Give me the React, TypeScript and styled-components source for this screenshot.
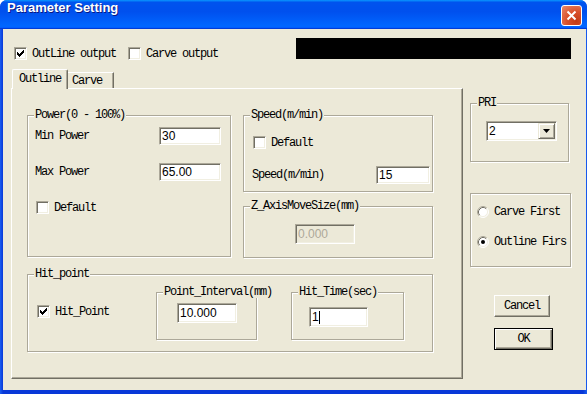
import styled, { createGlobalStyle, css } from "styled-components";

const GlobalStyle = createGlobalStyle`
  html, body { margin: 0; padding: 0; background: #fff; }
  body { width: 587px; height: 394px; overflow: hidden; }
`;

const MONO = `"Liberation Mono", "DejaVu Sans Mono", monospace`;
const SANS = `"Liberation Sans", Arial, sans-serif`;
const FACE = "#ece9d8";

const Window = styled.div`
  width: 587px;
  height: 394px;
  display: flex;
  flex-direction: column;
  background: #0842d8;
  border-radius: 7px 7px 0 0;
  overflow: hidden;
  font-family: ${MONO};
  font-size: 12px;
  letter-spacing: -1.2px;
  color: #000;
`;

const TitleBar = styled.div`
  flex: none;
  height: 29px;
  display: flex;
  align-items: flex-start;
  padding: 0 5px 0 7px;
  background: linear-gradient(
    #0997ff 0%,
    #0053ee 8%,
    #0050ee 40%,
    #0066ff 88%,
    #0066ff 93%,
    #005bff 95%,
    #003dd7 96%,
    #003dd7 100%
  );
`;

const Title = styled.span`
  font-family: ${SANS};
  font-weight: bold;
  font-size: 13px;
  line-height: 15px;
  letter-spacing: 0;
  color: #fff;
  text-shadow: 1px 1px 0 #0a1883;
`;

const CloseButton = styled.div`
  box-sizing: border-box;
  width: 21px;
  height: 21px;
  margin: 5px 0 0 auto;
  border: 1px solid #fff;
  border-radius: 3px;
  background: radial-gradient(circle at 75% 80%, #c23a15 0%, #d9502b 45%, #ea8a6c 100%);
  display: flex;
  align-items: center;
  justify-content: center;
`;

const Frame = styled.div`
  flex: 1;
  display: flex;
  padding: 0 4px 4px 3px;
  background: linear-gradient(90deg, #1a5ef0, #0838d8 3px, #0838d8 calc(100% - 4px), #1a5ef0);
`;

const Client = styled.div`
  flex: 1;
  display: flex;
  flex-direction: column;
  background: ${FACE};
  padding: 9px 15px 0 8px;
`;

const TopRow = styled.div`
  display: flex;
  align-items: flex-start;
  height: 21px;
`;

const OutputChecks = styled.div`
  display: flex;
  gap: 12px;
  margin: 9px 0 0 3px;
`;

const CheckItem = styled.div`
  display: flex;
  align-items: center;
  gap: 5px;
  height: 13px;
  white-space: nowrap;
`;

const BlackBar = styled.div`
  margin-left: auto;
  width: 275px;
  height: 21px;
  background: #000;
`;

const MainRow = styled.div`
  display: flex;
  margin-top: 10px;
`;

const TabArea = styled.div`
  display: flex;
  flex-direction: column;
  width: 452px;
`;

const TabStrip = styled.div`
  display: flex;
  align-items: flex-end;
  height: 19px;
  padding-left: 1px;
`;

const Tab = styled.div<{ $active?: boolean; $w: number }>`
  box-sizing: border-box;
  width: ${(p) => p.$w}px;
  display: flex;
  align-items: center;
  background: ${FACE};
  border-top: 1px solid #fff;
  border-right: 1px solid #716f64;
  box-shadow: inset -1px 0 0 #aca899;
  ${(p) =>
    p.$active
      ? css`
          position: relative;
          z-index: 1;
          height: 20px;
          margin-bottom: -1px;
          padding: 0 0 2px 6px;
          border-left: 1px solid #fff;
          border-radius: 2px 2px 0 0;
        `
      : css`
          height: 16px;
          padding: 0 0 0 4px;
        `}
`;

const TabPanel = styled.div`
  box-sizing: border-box;
  height: 291px;
  border: 1px solid;
  border-color: #fff #716f64 #716f64 #fff;
  box-shadow: inset -1px -1px 0 #aca899;
  padding: 26px 0 0 15px;
`;

const TopGroups = styled.div`
  display: grid;
  grid-template-columns: 204px 190px;
  grid-template-rows: 77px 52px;
  column-gap: 12px;
  row-gap: 14px;
`;

const Group = styled.div<{ $w: number; $h: number }>`
  position: relative;
  box-sizing: border-box;
  width: ${(p) => p.$w}px;
  height: ${(p) => p.$h}px;
  border: 1px solid #aca899;
  box-shadow: inset 1px 1px 0 #fff, 1px 1px 0 #fff;
`;

const PowerGroup = styled(Group)`
  grid-row: 1 / span 2;
`;

const HitGroup = styled(Group)`
  margin-top: 16px;
  display: flex;
  align-items: flex-start;
  padding-top: 17px;
`;

const Caption = styled.span`
  position: absolute;
  top: -7px;
  left: 6px;
  padding: 0 1px;
  line-height: 12px;
  white-space: nowrap;
  background: ${FACE};
`;

const GroupBody = styled.div<{ $pad: string }>`
  display: flex;
  flex-direction: column;
  padding: ${(p) => p.$pad};
`;

const FieldRow = styled.div<{ $gap?: number }>`
  display: flex;
  align-items: center;
  justify-content: space-between;
  margin-top: ${(p) => p.$gap ?? 0}px;
  white-space: nowrap;
`;

const Field = styled.div<{ $w: number; $h: number; $disabled?: boolean }>`
  box-sizing: border-box;
  width: ${(p) => p.$w}px;
  height: ${(p) => p.$h}px;
  display: flex;
  align-items: center;
  padding-left: 2px;
  font-family: ${SANS};
  font-size: 12px;
  letter-spacing: 0;
  color: ${(p) => (p.$disabled ? "#aca899" : "#000")};
  background: ${(p) => (p.$disabled ? FACE : "#fff")};
  border: 1px solid;
  border-color: #aca899 #fff #fff #aca899;
  box-shadow: inset 1px 1px 0 #716f64, inset -1px -1px 0 #f1efe2;
`;

const PlacedField = styled(Field)<{ $top: number; $left: number }>`
  margin: ${(p) => p.$top}px 0 0 ${(p) => p.$left}px;
`;

const Caret = styled.span`
  width: 1px;
  height: 13px;
  background: #000;
`;

const HitCheckCell = styled.div`
  box-sizing: border-box;
  width: 128px;
  padding: 13px 0 0 9px;
`;

const SubGroup = styled(Group)<{ $gap?: number }>`
  margin-left: ${(p) => p.$gap ?? 0}px;
`;

const RightColumn = styled.div`
  display: flex;
  flex-direction: column;
  margin-left: 7px;
  padding-top: 34px;
`;

const SelectBox = styled.div`
  box-sizing: border-box;
  width: 71px;
  height: 20px;
  margin: 17px 0 0 15px;
  display: flex;
  align-items: center;
  padding: 1px;
  background: #fff;
  border: 1px solid;
  border-color: #aca899 #fff #fff #aca899;
  box-shadow: inset 1px 1px 0 #716f64, inset -1px -1px 0 #f1efe2;
  font-family: ${SANS};
  letter-spacing: 0;
`;

const SelectValue = styled.span`
  flex: 1;
  padding-left: 1px;
`;

const DropButton = styled.div`
  box-sizing: border-box;
  width: 17px;
  height: 16px;
  display: flex;
  align-items: center;
  justify-content: center;
  background: ${FACE};
  border: 1px solid;
  border-color: ${FACE} #716f64 #716f64 ${FACE};
  box-shadow: inset 1px 1px 0 #fff, inset -1px -1px 0 #aca899;
`;

const RadioGroup = styled(Group)`
  margin-top: 31px;
  display: flex;
  flex-direction: column;
  gap: 18px;
  padding: 12px 0 0 6px;
`;

const RadioItem = styled.div`
  display: flex;
  align-items: center;
  gap: 5px;
  height: 12px;
  white-space: nowrap;
`;

const PushButton = styled.div<{ $w: number; $default?: boolean; $gap: number }>`
  box-sizing: border-box;
  width: ${(p) => p.$w}px;
  height: 22px;
  margin: ${(p) => p.$gap}px 0 0 24px;
  display: flex;
  align-items: center;
  justify-content: center;
  background: ${FACE};
  ${(p) =>
    p.$default
      ? css`
          border: 1px solid #000;
          box-shadow: inset 1px 1px 0 #fff, inset -1px -1px 0 #716f64,
            inset -2px -2px 0 #aca899;
        `
      : css`
          border: 1px solid;
          border-color: #fff #716f64 #716f64 #fff;
          box-shadow: inset -1px -1px 0 #aca899;
        `}
`;

const Box = styled.span`
  box-sizing: border-box;
  flex: none;
  width: 13px;
  height: 13px;
  display: inline-flex;
  align-items: center;
  justify-content: center;
  background: #fff;
  border: 1px solid;
  border-color: #aca899 #fff #fff #aca899;
  box-shadow: inset 1px 1px 0 #716f64, inset -1px -1px 0 #f1efe2;
`;

function CheckBox({ checked }: { checked?: boolean }) {
  return (
    <Box>
      {checked && (
        <svg width="7" height="7" viewBox="0 0 7 7" shapeRendering="crispEdges">
          <path
            d="M0 2h1v1h1v1h1v-1h1v-1h1v-1h1v-1h1v3h-1v1h-1v1h-1v1h-1v1h-1v-1h-1v-1h-1v-1h-1z"
            fill="#000"
          />
        </svg>
      )}
    </Box>
  );
}

function Radio({ checked }: { checked?: boolean }) {
  return (
    <svg width="12" height="12" viewBox="0 0 12 12" style={{ flex: "none" }}>
      <circle cx="6" cy="6" r="5" fill="#fff" />
      <path d="M2.11 9.89 A5.5 5.5 0 0 1 9.89 2.11" stroke="#aca899" fill="none" />
      <path d="M2.82 9.18 A4.5 4.5 0 0 1 9.18 2.82" stroke="#716f64" fill="none" />
      <path d="M9.89 2.11 A5.5 5.5 0 0 1 2.11 9.89" stroke="#fff" fill="none" />
      <path d="M9.18 2.82 A4.5 4.5 0 0 1 2.82 9.18" stroke="#f1efe2" fill="none" />
      {checked && <circle cx="6" cy="6" r="2" fill="#000" />}
    </svg>
  );
}

export default function App() {
  return (
    <>
      <GlobalStyle />
      <Window>
        <TitleBar>
          <Title>Parameter Setting</Title>
          <CloseButton>
            <svg width="11" height="11" viewBox="0 0 11 11">
              <path d="M1.5 1.5 L9.5 9.5 M9.5 1.5 L1.5 9.5" stroke="#fff" strokeWidth="2" />
            </svg>
          </CloseButton>
        </TitleBar>
        <Frame>
          <Client>
            <TopRow>
              <OutputChecks>
                <CheckItem>
                  <CheckBox checked />
                  OutLine output
                </CheckItem>
                <CheckItem>
                  <CheckBox />
                  Carve output
                </CheckItem>
              </OutputChecks>
              <BlackBar />
            </TopRow>

            <MainRow>
              <TabArea>
                <TabStrip>
                  <Tab $active $w={56}>Outline</Tab>
                  <Tab $w={46}>Carve</Tab>
                </TabStrip>
                <TabPanel>
                  <TopGroups>
                    <PowerGroup $w={204} $h={142}>
                      <Caption>Power(0 - 100%)</Caption>
                      <GroupBody $pad="11px 9px 0 7px">
                        <FieldRow>
                          Min Power
                          <Field $w={62} $h={18}>30</Field>
                        </FieldRow>
                        <FieldRow $gap={18}>
                          Max Power
                          <Field $w={62} $h={18}>65.00</Field>
                        </FieldRow>
                        <CheckItem style={{ marginTop: 20, marginLeft: 1 }}>
                          <CheckBox />
                          Default
                        </CheckItem>
                      </GroupBody>
                    </PowerGroup>

                    <Group $w={190} $h={77}>
                      <Caption>Speed(m/min)</Caption>
                      <GroupBody $pad="20px 2px 0 8px">
                        <CheckItem style={{ marginLeft: 1 }}>
                          <CheckBox />
                          Default
                        </CheckItem>
                        <FieldRow $gap={17}>
                          Speed(m/min)
                          <Field $w={54} $h={18}>15</Field>
                        </FieldRow>
                      </GroupBody>
                    </Group>

                    <Group $w={190} $h={52}>
                      <Caption>Z_AxisMoveSize(mm)</Caption>
                      <PlacedField $w={60} $h={20} $top={17} $left={51} $disabled>
                        0.000
                      </PlacedField>
                    </Group>
                  </TopGroups>

                  <HitGroup $w={406} $h={78}>
                    <Caption>Hit_point</Caption>
                    <HitCheckCell>
                      <CheckItem>
                        <CheckBox checked />
                        Hit_Point
                      </CheckItem>
                    </HitCheckCell>
                    <SubGroup $w={101} $h={48}>
                      <Caption>Point_Interval(mm)</Caption>
                      <PlacedField $w={60} $h={20} $top={10} $left={20}>
                        10.000
                      </PlacedField>
                    </SubGroup>
                    <SubGroup $w={113} $h={48} $gap={34}>
                      <Caption>Hit_Time(sec)</Caption>
                      <PlacedField $w={59} $h={20} $top={14} $left={17}>
                        1<Caret />
                      </PlacedField>
                    </SubGroup>
                  </HitGroup>
                </TabPanel>
              </TabArea>

              <RightColumn>
                <Group $w={99} $h={59}>
                  <Caption>PRI</Caption>
                  <SelectBox>
                    <SelectValue>2</SelectValue>
                    <DropButton>
                      <svg width="7" height="4" viewBox="0 0 7 4">
                        <path d="M0 0 H7 L3.5 4 Z" fill="#000" />
                      </svg>
                    </DropButton>
                  </SelectBox>
                </Group>

                <RadioGroup $w={101} $h={74}>
                  <RadioItem>
                    <Radio />
                    Carve First
                  </RadioItem>
                  <RadioItem>
                    <Radio checked />
                    Outline Firs
                  </RadioItem>
                </RadioGroup>

                <PushButton $w={56} $gap={28}>Cancel</PushButton>
                <PushButton $w={59} $gap={11} $default>
                  OK
                </PushButton>
              </RightColumn>
            </MainRow>
          </Client>
        </Frame>
      </Window>
    </>
  );
}
